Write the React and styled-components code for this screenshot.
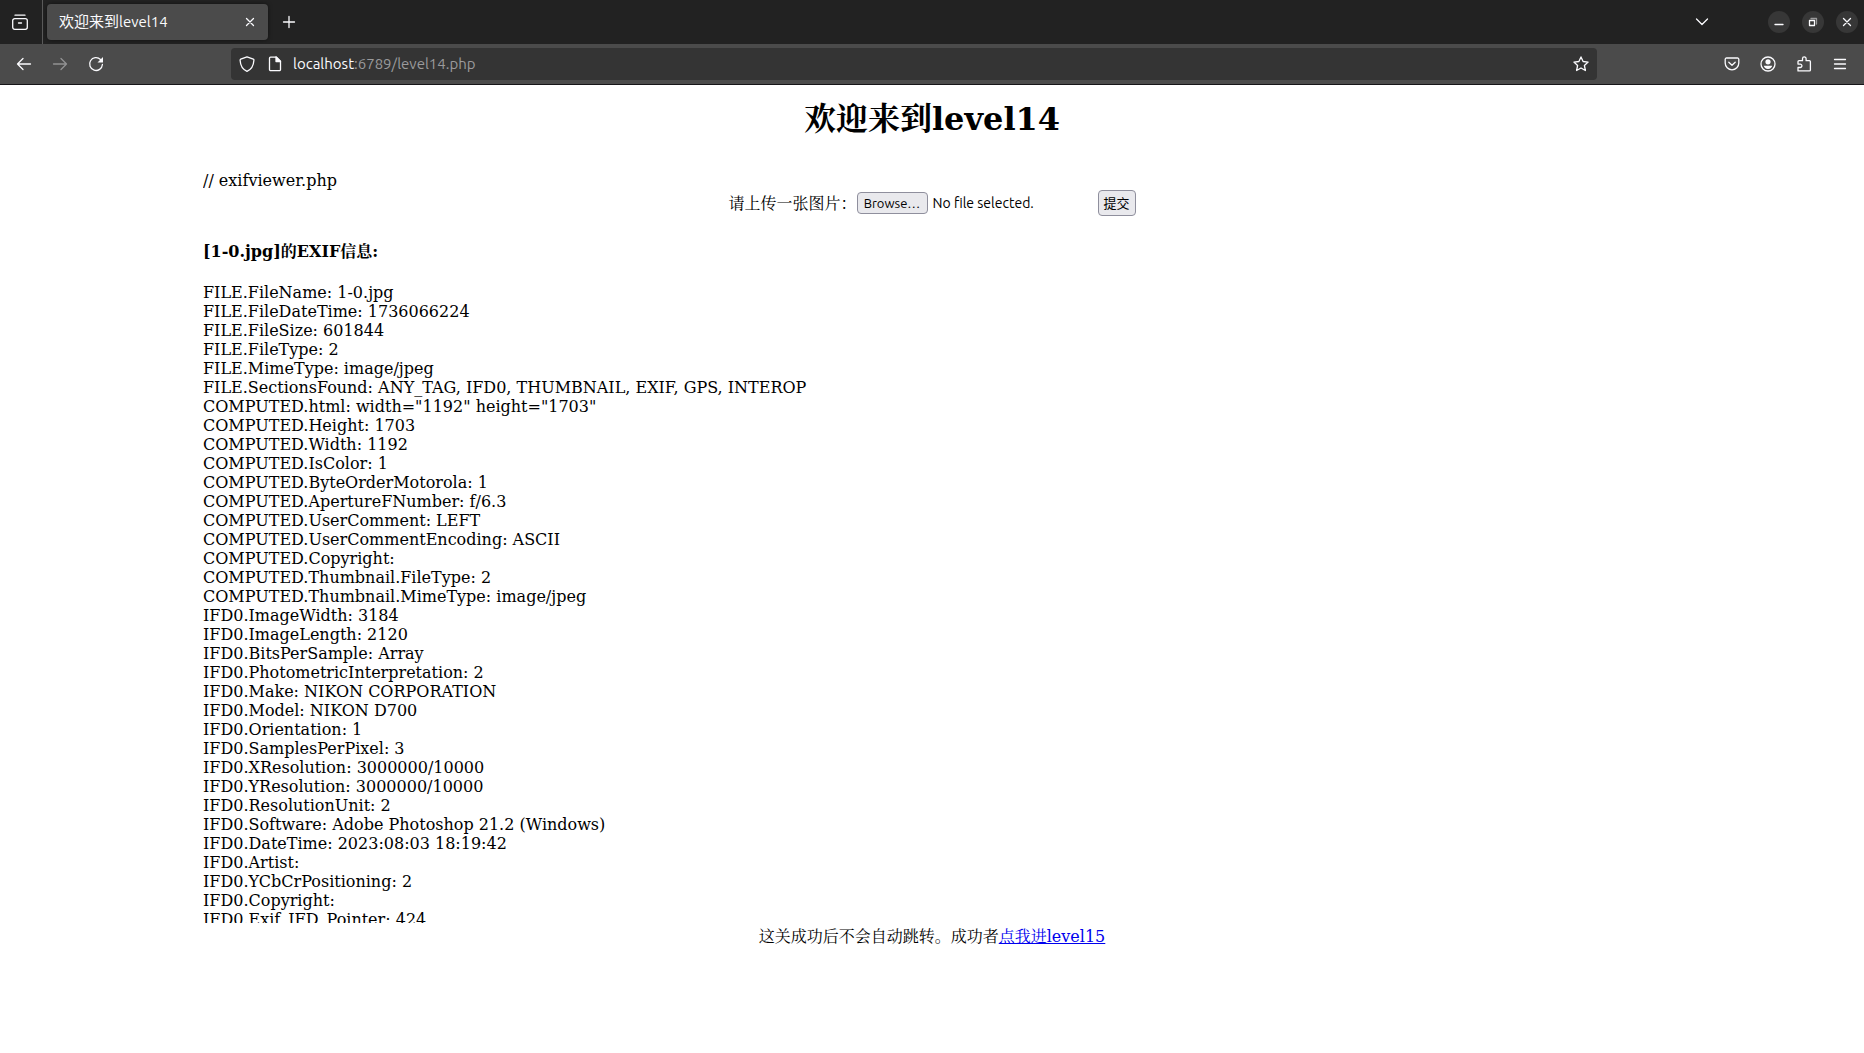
import React, { useRef, useState } from "react";
import styled, { createGlobalStyle, css } from "styled-components";

const chromeFont = `Ubuntu, "Noto Sans", "Noto Sans CJK SC", sans-serif`;
const pageFont = `"DejaVu Serif", "Noto Serif CJK SC", "Noto Sans CJK SC", serif`;

const GlobalStyle = createGlobalStyle`
  *, *::before, *::after { box-sizing: border-box; }
  html, body { margin: 0; background: #fff; }
  button { font: inherit; color: inherit; padding: 0; cursor: pointer; }
`;

const Window = styled.div`
  min-height: 100vh;
  display: flex;
  flex-direction: column;
  overflow: hidden;
`;

const TabBar = styled.header`
  height: 44px;
  display: flex;
  align-items: center;
  background: #222;
  color: #fbfbfe;
  font: 15px/20px ${chromeFont};
`;

const SidebarSlot = styled.div`
  height: 44px;
  width: 43px;
  padding: 0 4px;
  display: flex;
  align-items: center;
  border-right: 1px solid #5a5a5a;
`;

const IconButton = styled.button`
  width: 32px;
  height: 32px;
  flex: none;
  display: grid;
  place-items: center;
  border: 0;
  border-radius: 4px;
  background: none;
  opacity: ${(p) => (p.disabled ? 0.4 : 1)};
`;

const Tab = styled.div`
  width: 221px;
  height: 36px;
  margin: 0 5px 0 4px;
  padding: 0 2px 0 12px;
  display: flex;
  align-items: center;
  justify-content: space-between;
  border-radius: 4px;
  background: #4b4b4b;
  box-shadow: 0 0 4px rgba(0, 0, 0, 0.5);
`;

const WindowControls = styled.div`
  margin-left: auto;
  padding-right: 6px;
  display: flex;
  align-items: center;
  gap: 12px;
`;

const TabListSlot = styled.div`
  padding-right: 38px;
  display: flex;
`;

const RoundButton = styled.button`
  width: 22px;
  height: 22px;
  display: grid;
  place-items: center;
  border: 0;
  border-radius: 50%;
  background: #373737;
`;

const Toolbar = styled.nav`
  height: 41px;
  padding: 0 8px;
  display: grid;
  grid-template-columns: 223px minmax(0, 1366fr) minmax(140px, 259fr);
  align-items: center;
  background: #4b4b4b;
  border-bottom: 1px solid #161518;
  color: #fbfbfe;
`;

const ButtonGroup = styled.div`
  display: flex;
  gap: 4px;
  justify-content: ${(p) => (p.$end ? "flex-end" : "flex-start")};
`;

const AddressBar = styled.div`
  height: 32px;
  display: flex;
  align-items: center;
  border-radius: 4px;
  background: #343434;
`;

const AddressIcons = styled.div`
  width: 62px;
  padding-left: 2px;
  display: flex;
  button { width: 28px; }
`;

const Address = styled.div`
  flex: 1;
  color: #9a9a9c;
  font: 15px/20px ${chromeFont};
`;

const Host = styled.span`
  color: #fbfbfe;
`;

const Page = styled.main`
  flex: 1;
  padding: 0 8px;
  display: flex;
  flex-direction: column;
  align-items: center;
  color: #000;
  font: 16px/19px ${pageFont};
`;

const Title = styled.h1`
  margin: 14px 0 32px;
  font-size: 32px;
  line-height: 40px;
`;

const Viewer = styled.section`
  width: 100%;
  max-width: 1458px;
  height: 752px;
  overflow: hidden;
`;

const Line = styled.p`
  margin: 0;
`;

const UploadForm = styled.form`
  height: 26px;
  display: flex;
  align-items: center;
  justify-content: center;
`;

const fieldText = css`
  font: 13px/18px ${chromeFont};
`;

const FormButton = styled.button`
  && {
    ${fieldText}
    height: ${(p) => (p.$tall ? "26px" : "22px")};
    width: ${(p) => (p.$tall ? "38px" : "71px")};
  }
  border: 1px solid #8f8f9d;
  border-radius: 4px;
  background: #e9e9ed;
`;

const FileName = styled.output`
  ${fieldText}
  font-size: 14px;
  width: 165px;
  padding-left: 0;
  margin-left: 5px;
`;

const Heading = styled.h4`
  margin: 26px 0 22px;
  font-size: 16px;
  line-height: 19px;
`;

const DataList = styled.ul`
  margin: 0;
  padding: 0;
  list-style: none;
`;

const Footer = styled.p`
  margin: 4px 0 0;
  a { color: #0000ee; }
`;

const paths = {
  recent: <><path d="M3 1.200h10M2.700 4.600h10.600a2 2 0 0 1 2 2v6.700a2 2 0 0 1-2 2H2.700a2 2 0 0 1-2-2V6.600a2 2 0 0 1 2-2z" /><path d="M6.500 9h3" /></>,
  close: <path d="M4.500 4.500l7 7M11.500 4.500l-7 7" />,
  plus: <path d="M8 2.500v11M2.500 8h11" />,
  chevron: <path d="M2.500 5l5.500 5.500L13.500 5" />,
  back: <path d="M14.500 8H1.500M7 2.500L1.500 8L7 13.500" />,
  forward: <path d="M1.500 8h13M9 2.500L14.500 8L9 13.500" />,
  reload: <><path d="M12.500 3.500A6.400 6.400 0 1 0 14.400 8.500" /><path d="M15 1v5.500H9.500z" fill="currentColor" stroke="none" /></>,
  shield: <path d="M8 .8l6.300 2.400c.5.200.7.600.6 1.100C14.600 9.500 12.500 13.500 8 15.300C3.500 13.500 1.400 9.500 1.100 4.300c0-.5.200-.9.600-1.100z" />,
  page: <><path d="M3.500 1.200h6l4 4v8.300a1.200 1.200 0 0 1-1.200 1.200H3.700a1.200 1.200 0 0 1-1.200-1.200V2.200a1 1 0 0 1 1-1z" /><path d="M9 1v4.500h4.500z" fill="currentColor" /></>,
  star: <path d="M8 .9l2.100 4.600 5 .6-3.700 3.400 1 5L8 12l-4.400 2.500 1-5L.9 6.100l5-.6z" />,
  pocket: <><path d="M2.500 2h11a1.300 1.300 0 0 1 1.300 1.300V7a6.800 6.800 0 0 1-13.600 0V3.300A1.300 1.300 0 0 1 2.500 2z" /><path d="M4.800 6.200L8 9.200l3.200-3" /></>,
  account: <><circle cx="8" cy="8" r="7" /><circle cx="8" cy="5.800" r="2.600" fill="currentColor" stroke="none" /><path d="M3.800 9.800h8.400c-.3 2-2 3.200-4.200 3.200s-3.900-1.200-4.200-3.200z" fill="currentColor" stroke="none" /></>,
  puzzle: <path d="M2 14.900V11.500h2.200a1.700 1.700 0 0 0 0-3.400H2V5.700a1 1 0 0 1 1-1h3.500V2.700a1.800 1.800 0 0 1 3.600 0v2h3.300a1 1 0 0 1 1 1v8.200a1 1 0 0 1-1 1z" />,
  menu: <path d="M2.500 3.500h11M2.500 8h11M2.500 12.500h11" />,
  minimize: <path d="M4 10.500h8" />,
  restore: <><path d="M4.500 6.500h5v5h-5z" /><path d="M6 4.500h5.500v5.500" opacity=".5" /></>,
};

function Icon({ name, size = 16 }) {
  return (
    <svg width={size} height={size} viewBox="0 0 16 16" fill="none" stroke="currentColor" strokeWidth="1.300" strokeLinecap="round" strokeLinejoin="round" aria-hidden="true">
      {paths[name]}
    </svg>
  );
}

const exif = [
  "FILE.FileName: 1-0.jpg",
  "FILE.FileDateTime: 1736066224",
  "FILE.FileSize: 601844",
  "FILE.FileType: 2",
  "FILE.MimeType: image/jpeg",
  "FILE.SectionsFound: ANY_TAG, IFD0, THUMBNAIL, EXIF, GPS, INTEROP",
  'COMPUTED.html: width="1192" height="1703"',
  "COMPUTED.Height: 1703",
  "COMPUTED.Width: 1192",
  "COMPUTED.IsColor: 1",
  "COMPUTED.ByteOrderMotorola: 1",
  "COMPUTED.ApertureFNumber: f/6.3",
  "COMPUTED.UserComment: LEFT",
  "COMPUTED.UserCommentEncoding: ASCII",
  "COMPUTED.Copyright:",
  "COMPUTED.Thumbnail.FileType: 2",
  "COMPUTED.Thumbnail.MimeType: image/jpeg",
  "IFD0.ImageWidth: 3184",
  "IFD0.ImageLength: 2120",
  "IFD0.BitsPerSample: Array",
  "IFD0.PhotometricInterpretation: 2",
  "IFD0.Make: NIKON CORPORATION",
  "IFD0.Model: NIKON D700",
  "IFD0.Orientation: 1",
  "IFD0.SamplesPerPixel: 3",
  "IFD0.XResolution: 3000000/10000",
  "IFD0.YResolution: 3000000/10000",
  "IFD0.ResolutionUnit: 2",
  "IFD0.Software: Adobe Photoshop 21.2 (Windows)",
  "IFD0.DateTime: 2023:08:03 18:19:42",
  "IFD0.Artist:",
  "IFD0.YCbCrPositioning: 2",
  "IFD0.Copyright:",
  "IFD0.Exif_IFD_Pointer: 424",
];

export default function App() {
  const fileInput = useRef(null);
  const [fileName, setFileName] = useState("No file selected.");

  return (
    <Window lang="zh-CN">
      <GlobalStyle />
      <TabBar>
        <SidebarSlot>
          <IconButton aria-label="Recent browsing"><Icon name="recent" /></IconButton>
        </SidebarSlot>
        <Tab>
          <span>欢迎来到level14</span>
          <IconButton aria-label="Close tab"><Icon name="close" /></IconButton>
        </Tab>
        <IconButton aria-label="New tab"><Icon name="plus" /></IconButton>
        <WindowControls>
          <TabListSlot>
            <IconButton aria-label="List all tabs"><Icon name="chevron" /></IconButton>
          </TabListSlot>
          <RoundButton aria-label="Minimize"><Icon name="minimize" /></RoundButton>
          <RoundButton aria-label="Restore"><Icon name="restore" /></RoundButton>
          <RoundButton aria-label="Close window"><Icon name="close" /></RoundButton>
        </WindowControls>
      </TabBar>
      <Toolbar>
        <ButtonGroup>
          <IconButton aria-label="Back"><Icon name="back" /></IconButton>
          <IconButton aria-label="Forward" disabled><Icon name="forward" /></IconButton>
          <IconButton aria-label="Reload"><Icon name="reload" /></IconButton>
        </ButtonGroup>
        <AddressBar>
          <AddressIcons>
            <IconButton aria-label="Tracking protection"><Icon name="shield" /></IconButton>
            <IconButton aria-label="Site information"><Icon name="page" /></IconButton>
          </AddressIcons>
          <Address><Host>localhost</Host>:6789/level14.php</Address>
          <IconButton aria-label="Bookmark"><Icon name="star" /></IconButton>
        </AddressBar>
        <ButtonGroup $end>
          <IconButton aria-label="Pocket"><Icon name="pocket" /></IconButton>
          <IconButton aria-label="Account"><Icon name="account" /></IconButton>
          <IconButton aria-label="Extensions"><Icon name="puzzle" /></IconButton>
          <IconButton aria-label="Menu"><Icon name="menu" /></IconButton>
        </ButtonGroup>
      </Toolbar>
      <Page>
        <Title>欢迎来到level14</Title>
        <Viewer>
          <Line>// exifviewer.php</Line>
          <UploadForm onSubmit={(e) => e.preventDefault()}>
            <label htmlFor="upload">请上传一张图片：</label>
            <input
              id="upload"
              type="file"
              hidden
              ref={fileInput}
              onChange={(e) => setFileName(e.target.files[0]?.name ?? "No file selected.")}
            />
            <FormButton type="button" onClick={() => fileInput.current.click()}>Browse…</FormButton>
            <FileName htmlFor="upload">{fileName}</FileName>
            <FormButton type="submit" $tall>提交</FormButton>
          </UploadForm>
          <Heading>[1-0.jpg]的EXIF信息:</Heading>
          <DataList>
            {exif.map((row) => <li key={row}>{row}</li>)}
          </DataList>
        </Viewer>
        <Footer>这关成功后不会自动跳转。成功者<a href="#level15">点我进level15</a></Footer>
      </Page>
    </Window>
  );
}
